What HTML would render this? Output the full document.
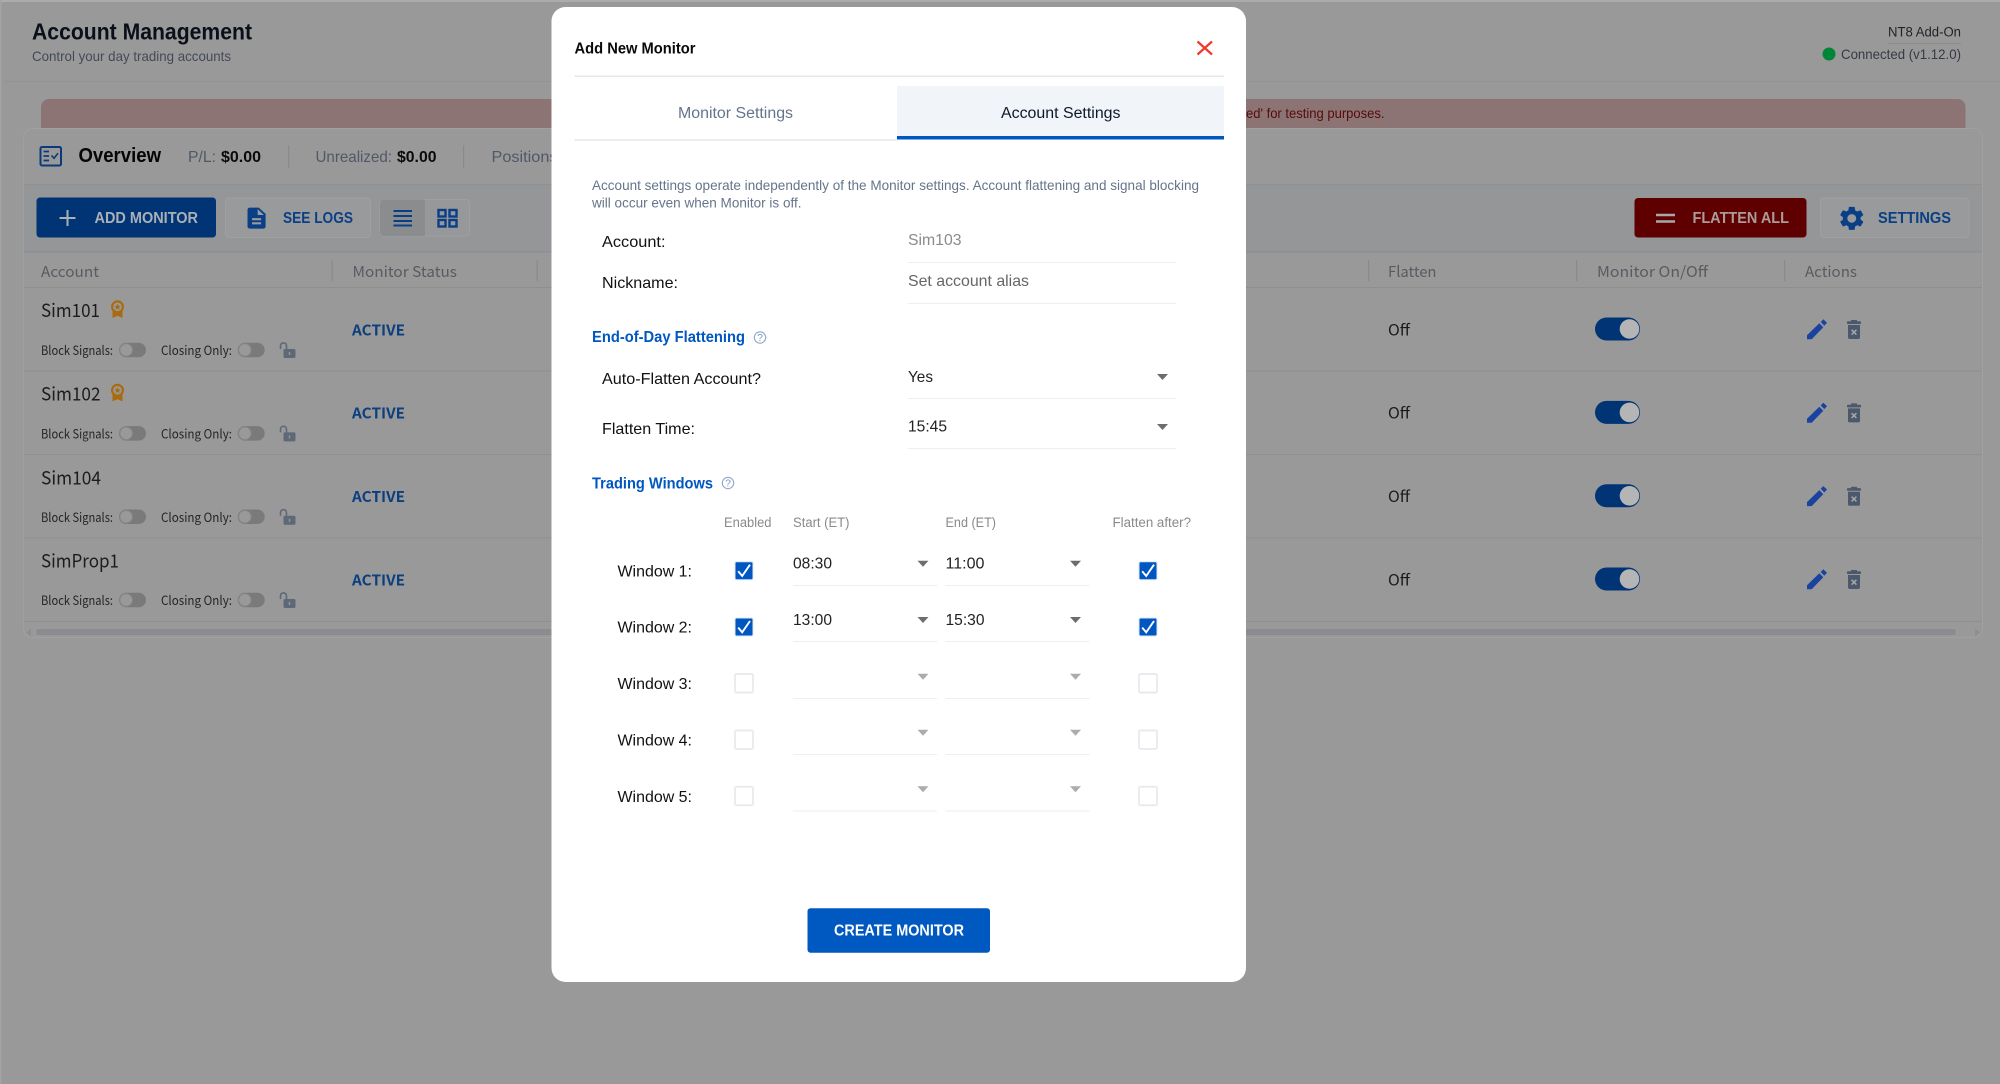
<!DOCTYPE html>
<html lang="en"><head><meta charset="utf-8"><title>Account Management</title>
<style>
html,body{margin:0;padding:0;width:2000px;height:1084px;overflow:hidden;background:#999}
svg{display:block}
text{font-family:"Liberation Sans",sans-serif;white-space:pre}
.b{font-weight:700}
.n{font-family:"Noto Sans CJK SC","Liberation Sans",sans-serif}
</style></head><body>
<svg xmlns="http://www.w3.org/2000/svg" width="2000" height="1084" viewBox="0 0 2000 1084">
<defs>
<g id="doc"><path d="M14 2H6c-1.100 0-2 .9-2 2v16c0 1.100.9 2 2 2h12c1.100 0 2-.9 2-2V8l-6-6zm2 16H8v-2h8v2zm0-4H8v-2h8v2zm-3-5V3.500L18.500 9H13z"/></g>
<g id="gear"><path d="M19.140 12.940c.04-.3.060-.61.060-.94 0-.32-.02-.64-.07-.94l2.030-1.580a.49.49 0 0 0 .12-.61l-1.920-3.320a.488.488 0 0 0-.59-.22l-2.390.96c-.5-.38-1.030-.7-1.620-.94l-.36-2.540a.484.484 0 0 0-.48-.41h-3.840c-.24 0-.43.17-.47.41l-.36 2.540c-.59.24-1.130.57-1.620.94l-2.390-.96c-.22-.08-.47 0-.59.22L2.740 8.870c-.12.21-.08.47.12.61l2.030 1.580c-.05.3-.09.63-.09.94s.02.64.07.94l-2.030 1.580a.49.49 0 0 0-.12.61l1.920 3.320c.12.22.37.29.59.22l2.390-.96c.5.38 1.030.7 1.620.94l.36 2.540c.05.24.24.41.48.41h3.840c.24 0 .44-.17.47-.41l.36-2.540c.59-.24 1.130-.56 1.620-.94l2.390.96c.22.08.47 0 .59-.22l1.920-3.320c.12-.22.07-.47-.12-.61l-2.010-1.580zM12 15.600c-1.980 0-3.600-1.620-3.600-3.600s1.620-3.600 3.600-3.600 3.600 1.620 3.600 3.600-1.620 3.600-3.600 3.600z"/></g>
<path id="edit" d="M1807 335.300L1819.300 323.300L1823.300 327.300L1811.700 339.300H1807zM1820.700 322L1823.300 319.300L1827 322.700L1824.300 325.700z" fill="#1a43a0"/>
<g id="del">
<rect x="1851" y="320" width="6" height="1.800" fill="#4c586c"/>
<rect x="1847" y="321.300" width="14" height="2.700" rx=".8" fill="#4c586c"/>
<path d="M1848 325H1860V337.300a1.700 1.700 0 0 1-1.700 1.700H1849.700a1.700 1.700 0 0 1-1.700-1.700z" fill="#4c586c"/>
<path d="M1851.600 329.800l4.800 4.800M1856.400 329.800l-4.800 4.800" stroke="#a9a9a9" stroke-width="1.500" fill="none"/>
</g>
<g id="medal">
<path d="M1.500 10.500 L1.500 18 L6.500 15.800 L11.500 18 L11.500 10.500z" fill="#a96b10"/>
<circle cx="6.500" cy="6.800" r="5.400" fill="#999" stroke="#a96b10" stroke-width="2.200"/>
<path d="M6.500 3.800l.95 2 2.150.25-1.600 1.450.45 2.100-1.950-1.080-1.950 1.080.45-2.100-1.600-1.450 2.150-.25z" fill="#a96b10"/>
</g>
<g id="lock">
<rect x="4" y="7" width="12" height="9" rx="1.500" fill="#5f6877"/>
<path d="M1 7 V3.800 C1 1.900 2.300 .9 4 .9 C5.700 .9 7 1.900 7 3.800 V7" fill="none" stroke="#5f6877" stroke-width="1.600"/>
<rect x="9.300" y="10" width="1.400" height="3" fill="#999"/>
</g>
<g id="tog">
<rect x="0" y="0" width="27" height="14.500" rx="7.250" fill="#7a7a7a"/>
<circle cx="7.200" cy="7.250" r="6.300" fill="#999" stroke="#858585" stroke-width="1"/>
</g>
<g id="togon">
<rect x="0" y="0" width="45" height="23" rx="11.500" fill="#003474"/>
<circle cx="34.500" cy="11.500" r="9.800" fill="#b5b5b5"/>
</g>
<g id="chk">
<rect x="-9" y="-9" width="18" height="18" rx="1.500" fill="#0057c2" stroke="#dbe6f5" stroke-width="1"/>
<path d="M-5.800 .6 L-1.800 5.300 L6 -6" fill="none" stroke="#fff" stroke-width="1.900"/>
</g>
<g id="unchk">
<rect x="-9" y="-9.250" width="18" height="18.500" rx="1.500" fill="#fff" stroke="#e9e9ef" stroke-width="1.800"/>
</g>
<path id="ar" d="M-5.500 -3 H5.500 L0 3z" fill="#6d6d6d"/>
<path id="ard" d="M-5.500 -3 H5.500 L0 3z" fill="#acacac"/>
<g id="help">
<circle cx="0" cy="0" r="5.700" fill="none" stroke="#8fa8cb" stroke-width="1.100"/>
</g>
</defs>

<!-- page -->
<rect width="2000" height="1084" fill="#999"/>
<rect width="2000" height="2" fill="#ababab"/>
<rect width="1.500" height="1084" fill="#a3a3a3"/>
<text class="b" x="32" y="39.500" font-size="23" fill="#0b0f1a" textLength="220" lengthAdjust="spacingAndGlyphs">Account Management</text>
<text x="32" y="61" font-size="14" fill="#434a57" textLength="199" lengthAdjust="spacingAndGlyphs">Control your day trading accounts</text>
<rect x="5" y="81" width="1995" height="1" fill="#939393"/>

<text x="1888" y="36.500" font-size="13.500" fill="#1f2228" textLength="73" lengthAdjust="spacingAndGlyphs">NT8 Add-On</text>
<line x1="1888" y1="43.500" x2="1961" y2="43.500" stroke="#8d8d8d" stroke-width="1"/>
<ellipse cx="1829" cy="54" rx="6.500" ry="6.500" fill="#008638"/>
<text x="1841" y="59" font-size="14" fill="#353a43" textLength="120" lengthAdjust="spacingAndGlyphs">Connected (v1.12.0)</text>

<!-- alert -->
<path d="M41 128 V107 a8 8 0 0 1 8-8 H1957.500 a8 8 0 0 1 8 8 V128z" fill="#8c7474"/>
<text x="1246" y="118" font-size="14" fill="#560b0b" textLength="138.500" lengthAdjust="spacingAndGlyphs">ed' for testing purposes.</text>

<!-- card -->
<rect x="23.500" y="128.500" width="1959" height="509" rx="9" fill="#999" stroke="#a0a0a0" stroke-width="1"/>
<rect x="24" y="184.500" width="1958" height="67" fill="#949698"/>
<rect x="24" y="184" width="1958" height="1" fill="#909090"/>
<rect x="24" y="251" width="1958" height="1.500" fill="#8c9095"/>
<rect x="24" y="287" width="1958" height="1" fill="#8f8f8f"/>
<rect x="24" y="370.500" width="1958" height="1" fill="#8f8f8f"/>
<rect x="24" y="454" width="1958" height="1" fill="#8f8f8f"/>
<rect x="24" y="537.500" width="1958" height="1" fill="#8f8f8f"/>
<rect x="24" y="621" width="1958" height="1" fill="#8f8f8f"/>

<!-- overview -->
<rect x="40.500" y="147" width="20.500" height="18.500" rx="1.500" fill="none" stroke="#0a3a7a" stroke-width="2"/>
<path d="M43.500 151.500h5.500M43.500 156h5.500M43.500 160.500h5.500" stroke="#0a3a7a" stroke-width="1.800" fill="none"/>
<path d="M51.500 155.500l2.500 2.800 4-5" stroke="#0a3a7a" stroke-width="1.600" fill="none"/>
<text class="b" x="78.500" y="162" font-size="20" fill="#050505" textLength="82.500" lengthAdjust="spacingAndGlyphs">Overview</text>
<text x="188" y="162" font-size="16" fill="#505866" textLength="28" lengthAdjust="spacingAndGlyphs">P/L:</text>
<text class="b" x="221" y="162" font-size="16" fill="#0a0a0a" textLength="40" lengthAdjust="spacingAndGlyphs">$0.00</text>
<rect x="288" y="145" width="1.200" height="23" fill="#8a8a8a"/>
<text x="315.500" y="162" font-size="16" fill="#505866" textLength="76.500" lengthAdjust="spacingAndGlyphs">Unrealized:</text>
<text class="b" x="397" y="162" font-size="16" fill="#0a0a0a" textLength="39.500" lengthAdjust="spacingAndGlyphs">$0.00</text>
<rect x="463" y="145" width="1.200" height="23" fill="#8a8a8a"/>
<text x="491.500" y="162" font-size="16" fill="#505866" textLength="66" lengthAdjust="spacingAndGlyphs">Positions</text>

<!-- toolbar -->
<rect x="36.500" y="197.500" width="179.500" height="40" rx="3.500" fill="#003474"/>
<path d="M59.500 218h16M67.500 210v16" stroke="#a9b0b8" stroke-width="2" fill="none"/>
<text class="b" x="94.500" y="223" font-size="15.500" fill="#a9b0b8" textLength="103.500" lengthAdjust="spacingAndGlyphs">ADD MONITOR</text>

<rect x="225.500" y="198" width="145" height="39.500" rx="3.500" fill="#989a9c" stroke="#a0a0a0" stroke-width="1"/>
<use href="#doc" transform="translate(243,205.500) scale(1.130,1.050)" fill="#0a3f85"/>
<text class="b" x="283" y="223" font-size="15.500" fill="#0a3f85" textLength="70" lengthAdjust="spacingAndGlyphs">SEE LOGS</text>

<rect x="380" y="199.500" width="89.500" height="36.500" rx="4" fill="#96989a" stroke="#a0a0a0" stroke-width="1"/>
<path d="M380 203.500 a4 4 0 0 1 4-4 H425 V236 H384 a4 4 0 0 1-4-4z" fill="#8b8c8e"/>
<path d="M393.500 211h18.500M393.500 216h18.500M393.500 221h18.500M393.500 225.500h18.500" stroke="#0a3f85" stroke-width="2" fill="none"/>
<g fill="none" stroke="#0a3f85" stroke-width="2.400">
<rect x="438.500" y="210" width="7" height="6.500"/><rect x="449.500" y="210" width="7" height="6.500"/>
<rect x="438.500" y="220" width="7" height="6.500"/><rect x="449.500" y="220" width="7" height="6.500"/>
</g>

<rect x="1634.500" y="198" width="172" height="39.500" rx="3.500" fill="#5f0000"/>
<path d="M1656 215h19M1656 221.500h19" stroke="#a8a8a8" stroke-width="2.400" fill="none"/>
<text class="b" x="1692.500" y="223" font-size="15.500" fill="#ad9b9b" textLength="96.500" lengthAdjust="spacingAndGlyphs">FLATTEN ALL</text>

<rect x="1820.500" y="198" width="148.500" height="39.500" rx="3.500" fill="#989a9c" stroke="#a0a0a0" stroke-width="1"/>
<use href="#gear" transform="translate(1837,204) scale(1.230,1.200)" fill="#0a3f85"/>
<text class="b" x="1878" y="223" font-size="15.500" fill="#0a3f85" textLength="73" lengthAdjust="spacingAndGlyphs">SETTINGS</text>

<!-- table head -->
<g fill="#585b61" font-size="15">
<text class="n" x="41" y="277" textLength="58" lengthAdjust="spacingAndGlyphs">Account</text>
<text class="n" x="352.500" y="277" textLength="104.500" lengthAdjust="spacingAndGlyphs">Monitor Status</text>
<text class="n" x="1388" y="277" textLength="48.500" lengthAdjust="spacingAndGlyphs">Flatten</text>
<text class="n" x="1597" y="277" textLength="111" lengthAdjust="spacingAndGlyphs">Monitor On/Off</text>
<text class="n" x="1805" y="277" textLength="52" lengthAdjust="spacingAndGlyphs">Actions</text>
</g>
<g fill="#8a8a8a">
<rect x="331.500" y="260" width="1.200" height="21"/><rect x="536.500" y="260" width="1.200" height="21"/>
<rect x="1368" y="260" width="1.200" height="21"/><rect x="1576" y="260" width="1.200" height="21"/><rect x="1784" y="260" width="1.200" height="21"/>
</g>

<!-- row 1 -->
<g>
<text class="n" x="41" y="317" font-size="18.500" fill="#1c1c1c" textLength="59" lengthAdjust="spacingAndGlyphs">Sim101</text>
<use href="#medal" x="111" y="300"/>
<text class="n" x="41" y="355" font-size="12.500" fill="#242424" textLength="72" lengthAdjust="spacingAndGlyphs">Block Signals:</text>
<use href="#tog" x="119" y="342.700"/>
<text class="n" x="161" y="355" font-size="12.500" fill="#242424" textLength="71" lengthAdjust="spacingAndGlyphs">Closing Only:</text>
<use href="#tog" x="237.700" y="342.700"/>
<use href="#lock" x="279.500" y="342"/>
<text class="n b" x="352" y="335.300" font-size="15" fill="#0c3f7e" textLength="53" lengthAdjust="spacingAndGlyphs">ACTIVE</text>
<text class="n" x="1388" y="335.300" font-size="15.500" fill="#1a1a1a" textLength="22" lengthAdjust="spacingAndGlyphs">Off</text>
<use href="#togon" x="1595" y="317.500"/>
<use href="#edit"/>
<use href="#del"/>
</g>
<!-- row 2 -->
<g transform="translate(0,83.400)">
<text class="n" x="41" y="317" font-size="18.500" fill="#1c1c1c" textLength="59.500" lengthAdjust="spacingAndGlyphs">Sim102</text>
<use href="#medal" x="111" y="300"/>
<text class="n" x="41" y="355" font-size="12.500" fill="#242424" textLength="72" lengthAdjust="spacingAndGlyphs">Block Signals:</text>
<use href="#tog" x="119" y="342.700"/>
<text class="n" x="161" y="355" font-size="12.500" fill="#242424" textLength="71" lengthAdjust="spacingAndGlyphs">Closing Only:</text>
<use href="#tog" x="237.700" y="342.700"/>
<use href="#lock" x="279.500" y="342"/>
<text class="n b" x="352" y="335.300" font-size="15" fill="#0c3f7e" textLength="53" lengthAdjust="spacingAndGlyphs">ACTIVE</text>
<text class="n" x="1388" y="335.300" font-size="15.500" fill="#1a1a1a" textLength="22" lengthAdjust="spacingAndGlyphs">Off</text>
<use href="#togon" x="1595" y="317.500"/>
<use href="#edit"/>
<use href="#del"/>
</g>
<!-- row 3 -->
<g transform="translate(0,166.800)">
<text class="n" x="41" y="317.500" font-size="18.500" fill="#1c1c1c" textLength="60" lengthAdjust="spacingAndGlyphs">Sim104</text>
<text class="n" x="41" y="355" font-size="12.500" fill="#242424" textLength="72" lengthAdjust="spacingAndGlyphs">Block Signals:</text>
<use href="#tog" x="119" y="342.700"/>
<text class="n" x="161" y="355" font-size="12.500" fill="#242424" textLength="71" lengthAdjust="spacingAndGlyphs">Closing Only:</text>
<use href="#tog" x="237.700" y="342.700"/>
<use href="#lock" x="279.500" y="342"/>
<text class="n b" x="352" y="335.300" font-size="15" fill="#0c3f7e" textLength="53" lengthAdjust="spacingAndGlyphs">ACTIVE</text>
<text class="n" x="1388" y="335.300" font-size="15.500" fill="#1a1a1a" textLength="22" lengthAdjust="spacingAndGlyphs">Off</text>
<use href="#togon" x="1595" y="317.500"/>
<use href="#edit"/>
<use href="#del"/>
</g>
<!-- row 4 -->
<g transform="translate(0,250)">
<text class="n" x="41" y="317.500" font-size="18.500" fill="#1c1c1c" textLength="78" lengthAdjust="spacingAndGlyphs">SimProp1</text>
<text class="n" x="41" y="355" font-size="12.500" fill="#242424" textLength="72" lengthAdjust="spacingAndGlyphs">Block Signals:</text>
<use href="#tog" x="119" y="342.700"/>
<text class="n" x="161" y="355" font-size="12.500" fill="#242424" textLength="71" lengthAdjust="spacingAndGlyphs">Closing Only:</text>
<use href="#tog" x="237.700" y="342.700"/>
<use href="#lock" x="279.500" y="342"/>
<text class="n b" x="352" y="335.300" font-size="15" fill="#0c3f7e" textLength="53" lengthAdjust="spacingAndGlyphs">ACTIVE</text>
<text class="n" x="1388" y="335.300" font-size="15.500" fill="#1a1a1a" textLength="22" lengthAdjust="spacingAndGlyphs">Off</text>
<use href="#togon" x="1595" y="317.500"/>
<use href="#edit"/>
<use href="#del"/>
</g>

<!-- scrollbar -->
<rect x="36" y="629" width="1920" height="6" rx="3" fill="#8b8c90"/>
<path d="M1975 628.500l5 4-5 4z" fill="#8d8e92"/>
<path d="M31 628.500l-5 4 5 4z" fill="#8d8e92"/>

<!-- modal -->
<rect x="551.500" y="7" width="694.500" height="975" rx="14" fill="#fff"/>
<text class="b" x="574.500" y="53.500" font-size="16" fill="#0a0a0a" textLength="121" lengthAdjust="spacingAndGlyphs">Add New Monitor</text>
<path d="M1197.500 41.500L1212 54.500M1212 41.500L1197.500 54.500" stroke="#f0392b" stroke-width="2.200" fill="none"/>
<rect x="574.500" y="75.500" width="649.500" height="1.500" fill="#e4e6ea"/>

<rect x="897" y="86" width="327" height="50.500" fill="#f1f5f9"/>
<rect x="574.500" y="139.300" width="322.500" height="1.500" fill="#e4e6ea"/>
<rect x="897" y="136" width="327" height="3.500" fill="#0057c2"/>
<text x="678" y="118" font-size="15.500" fill="#64748b" textLength="115" lengthAdjust="spacingAndGlyphs">Monitor Settings</text>
<text x="1001" y="118" font-size="15.500" fill="#0f172a" textLength="119.500" lengthAdjust="spacingAndGlyphs">Account Settings</text>

<text x="592" y="190" font-size="14" fill="#64748b" textLength="607" lengthAdjust="spacingAndGlyphs">Account settings operate independently of the Monitor settings. Account flattening and signal blocking</text>
<text x="592" y="207.700" font-size="14" fill="#64748b" textLength="209.500" lengthAdjust="spacingAndGlyphs">will occur even when Monitor is off.</text>

<text x="602" y="247" font-size="16" fill="#111" textLength="63.500" lengthAdjust="spacingAndGlyphs">Account:</text>
<text x="602" y="288" font-size="16" fill="#111" textLength="76" lengthAdjust="spacingAndGlyphs">Nickname:</text>
<text x="908" y="245" font-size="16" fill="#8a8a8a" textLength="53.500" lengthAdjust="spacingAndGlyphs">Sim103</text>
<text x="908" y="286" font-size="16" fill="#666" textLength="121" lengthAdjust="spacingAndGlyphs">Set account alias</text>
<g fill="#eeeeee">
<rect x="908" y="262" width="268" height="1"/>
<rect x="908" y="303" width="268" height="1"/>
<rect x="908" y="398" width="268" height="1"/>
<rect x="908" y="448" width="268" height="1"/>
<rect x="793" y="585" width="144" height="1"/><rect x="945.500" y="585" width="144" height="1"/>
<rect x="793" y="641" width="144" height="1"/><rect x="945.500" y="641" width="144" height="1"/>
<rect x="793" y="698" width="144" height="1"/><rect x="945.500" y="698" width="144" height="1"/>
<rect x="793" y="754" width="144" height="1"/><rect x="945.500" y="754" width="144" height="1"/>
<rect x="793" y="810.500" width="144" height="1"/><rect x="945.500" y="810.500" width="144" height="1"/>
</g>

<text class="b" x="592" y="342" font-size="15.500" fill="#0057c2" textLength="153" lengthAdjust="spacingAndGlyphs">End-of-Day Flattening</text>
<use href="#help" x="760" y="337.500"/>
<text x="760" y="341.200" font-size="10.500" fill="#7d9ac2" text-anchor="middle">?</text>
<text x="602" y="384" font-size="16" fill="#111" textLength="159" lengthAdjust="spacingAndGlyphs">Auto-Flatten Account?</text>
<text x="908" y="382" font-size="16" fill="#222" textLength="25" lengthAdjust="spacingAndGlyphs">Yes</text>
<use href="#ar" x="1162.500" y="377"/>
<text x="602" y="434" font-size="16" fill="#111" textLength="93" lengthAdjust="spacingAndGlyphs">Flatten Time:</text>
<text x="908" y="431.700" font-size="16" fill="#222" textLength="39" lengthAdjust="spacingAndGlyphs">15:45</text>
<use href="#ar" x="1162.500" y="427"/>

<text class="b" x="592" y="488.500" font-size="15.500" fill="#0057c2" textLength="121" lengthAdjust="spacingAndGlyphs">Trading Windows</text>
<use href="#help" x="728" y="483"/>
<text x="728" y="486.700" font-size="10.500" fill="#7d9ac2" text-anchor="middle">?</text>

<g font-size="13.500" fill="#8a8a8a">
<text x="724" y="527" textLength="47.500" lengthAdjust="spacingAndGlyphs">Enabled</text>
<text x="793" y="527" textLength="56.500" lengthAdjust="spacingAndGlyphs">Start (ET)</text>
<text x="945.500" y="527" textLength="50.500" lengthAdjust="spacingAndGlyphs">End (ET)</text>
<text x="1112.500" y="527" textLength="78.500" lengthAdjust="spacingAndGlyphs">Flatten after?</text>
</g>

<g font-size="16" fill="#111">
<text x="617.500" y="576.700" textLength="74.500" lengthAdjust="spacingAndGlyphs">Window 1:</text>
<text x="617.500" y="632.700" textLength="74.500" lengthAdjust="spacingAndGlyphs">Window 2:</text>
<text x="617.500" y="689" textLength="74.500" lengthAdjust="spacingAndGlyphs">Window 3:</text>
<text x="617.500" y="745.700" textLength="74.500" lengthAdjust="spacingAndGlyphs">Window 4:</text>
<text x="617.500" y="802" textLength="74.500" lengthAdjust="spacingAndGlyphs">Window 5:</text>
</g>
<g font-size="16" fill="#222">
<text x="793" y="568.700" textLength="39" lengthAdjust="spacingAndGlyphs">08:30</text>
<text x="945.500" y="568.700" textLength="39" lengthAdjust="spacingAndGlyphs">11:00</text>
<text x="793" y="625" textLength="39" lengthAdjust="spacingAndGlyphs">13:00</text>
<text x="945.500" y="625" textLength="39" lengthAdjust="spacingAndGlyphs">15:30</text>
</g>
<use href="#chk" x="744" y="570.700"/><use href="#chk" x="1148" y="570.700"/>
<use href="#chk" x="744" y="627"/><use href="#chk" x="1148" y="627"/>
<use href="#unchk" x="744" y="683.300"/><use href="#unchk" x="1148" y="683.300"/>
<use href="#unchk" x="744" y="739.700"/><use href="#unchk" x="1148" y="739.700"/>
<use href="#unchk" x="744" y="796"/><use href="#unchk" x="1148" y="796"/>
<use href="#ar" x="923" y="563.700"/><use href="#ar" x="1075.500" y="563.700"/>
<use href="#ar" x="923" y="620"/><use href="#ar" x="1075.500" y="620"/>
<use href="#ard" x="923" y="676.700"/><use href="#ard" x="1075.500" y="676.700"/>
<use href="#ard" x="923" y="732.700"/><use href="#ard" x="1075.500" y="732.700"/>
<use href="#ard" x="923" y="789.300"/><use href="#ard" x="1075.500" y="789.300"/>

<rect x="807.500" y="908.300" width="182.500" height="44.500" rx="3" fill="#0059c1"/>
<text class="b" x="834" y="935.700" font-size="15.500" fill="#fff" textLength="130" lengthAdjust="spacingAndGlyphs">CREATE MONITOR</text>
</svg>
</body></html>
